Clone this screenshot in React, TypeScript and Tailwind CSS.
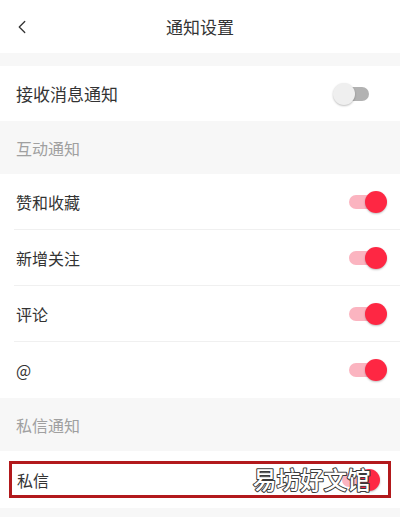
import { ChevronLeft } from 'lucide-react';

const ROWS = ['赞和收藏', '新增关注', '评论', '@'];

function Toggle({ on }: { on: boolean }) {
  if (on) {
    return (
      <div className="relative w-[38px] h-[22px]">
        <div className="absolute left-0 right-[6px] top-[4px] h-[14px] rounded-full bg-[#fbb4c0]" />
        <div className="absolute right-0 top-0 w-[22px] h-[22px] rounded-full bg-[#fe2743] shadow-[0_1px_2px_rgba(0,0,0,0.25)]" />
      </div>
    );
  }
  return (
    <div className="relative w-[38px] h-[22px]">
      <div className="absolute left-[6px] right-[2px] top-[4px] h-[14px] rounded-full bg-[#b2b2b2]" />
      <div className="absolute left-0 top-0 w-[22px] h-[22px] rounded-full bg-[#efefef] shadow-[0_1px_2px_rgba(0,0,0,0.25)]" />
    </div>
  );
}

export default function App() {
  return (
    <div className="w-[400px] h-[517px] overflow-hidden bg-[#f7f7f7] font-['Noto_Sans_CJK_SC',sans-serif] text-[#333]">
      {/* Header */}
      <div className="h-[53px] bg-white flex items-center relative">
        <ChevronLeft className="absolute left-[11px] top-[16px]" size={22} strokeWidth={1.4} color="#333" />
        <div className="flex-1 text-center text-[17px] leading-none">通知设置</div>
      </div>

      <div className="h-[13px]" />

      <div className="h-[55px] bg-white flex items-center justify-between pl-[16px] pr-[27px]">
        <span className="text-[17px]">接收消息通知</span>
        <div className="mr-[2px]"><Toggle on={false} /></div>
      </div>

      <div className="h-[53px] flex items-center pl-[16px] text-[16px] text-[#a0a0a0]">互动通知</div>

      <div className="bg-white">
        {ROWS.map((r, i) => (
          <div key={r} className="pl-[14px]">
            <div className={`h-[56px] flex items-center justify-between pl-[2px] pr-[13px] ${i < ROWS.length - 1 ? 'border-b border-[#f0f0f0]' : ''}`}>
              <span className="text-[16px]">{r}</span>
              <Toggle on />
            </div>
          </div>
        ))}
      </div>

      <div className="h-[53px] flex items-center pl-[16px] text-[16px] text-[#a0a0a0]">私信通知</div>

      <div className="h-[57px] bg-white px-[9px] py-[10px] relative">
        <div className="h-full border-[3px] border-[#b2191c] flex items-center justify-between pl-[5px] pr-[8px]">
          <span className="text-[16px]">私信</span>
          <Toggle on />
        </div>
        {/* watermark */}
        <svg className="absolute left-[250px] top-[12px] overflow-visible" width="140" height="34">
          <text
            x="3"
            y="26"
            fontSize="23.5"
            fontWeight="500"
            fontFamily="'Noto Sans CJK SC', sans-serif"
            fill="#ffffff"
            stroke="#3a3a3a"
            strokeWidth="2"
            paintOrder="stroke"
            strokeLinejoin="round"
          >
            易坊好文馆
          </text>
        </svg>
      </div>
    </div>
  );
}
